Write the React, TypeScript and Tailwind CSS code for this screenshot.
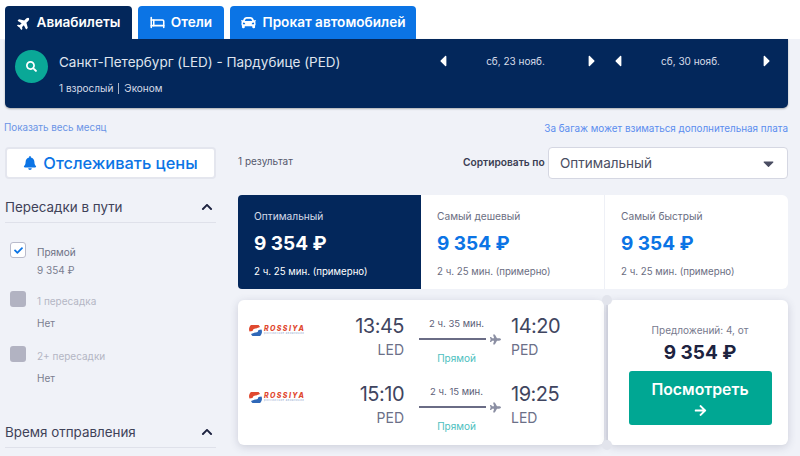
import { FaPlane, FaCar, FaBell, FaSearch, FaChevronUp, FaArrowRight, FaCaretLeft, FaCaretRight, FaCaretDown, FaCheck } from "react-icons/fa";
import { Bed } from "lucide-react";

function Logo() {
  return (
    <div className="flex items-center gap-[2px] w-[55px] h-[14px]">
      <svg width="13" height="11" viewBox="0 0 13 11" className="shrink-0">
        <path d="M0.5 6.5 A5.5 5.5 0 0 1 11 2 L7 3.5 A3 3 0 0 0 3.5 6 Z" fill="#e0492f" />
        <path d="M12.5 4.5 A5.5 5.5 0 0 1 2 9 L6 7.5 A3 3 0 0 0 9.5 5 Z" fill="#2f68b8" />
      </svg>
      <div className="flex flex-col items-start leading-none">
        <span className="text-[7px] leading-[7px] font-extrabold italic tracking-[1.4px] text-[#e0492f]">ROSSIYA</span>
        <span className="text-[2.5px] leading-[3px] text-[#8aa4cc] tracking-[0.6px] whitespace-nowrap">российские авиалинии</span>
      </div>
    </div>
  );
}

function Flight({ dep, from, dur, arr, to, logoTop }: { dep: string; from: string; dur: string; arr: string; to: string; logoTop: string }) {
  return (
    <div className="flex items-start h-[68px]">
      <div className={`w-[55px] ${logoTop}`}><Logo /></div>
      <div className="w-[100px] text-right">
        <div className="text-[20px] leading-[26px] tracking-[-0.5px] text-[#3f4560]">{dep}</div>
        <div className="text-[14px] leading-[20px] mt-[1px] text-[#6b7088]">{from}</div>
      </div>
      <div className="w-[82px] ml-[15px] flex flex-col">
        <div className="w-[75px] text-center text-[9.5px] leading-[14px] mt-[4px] text-[#5c6078] whitespace-nowrap">{dur}</div>
        <div className="flex items-center h-[14px] mt-[1px]">
          <div className="w-[67px] h-[2px] bg-[#6a6c85]" />
          <FaPlane className="ml-[4px] text-[#8b8fa3] text-[11px]" />
        </div>
        <div className="w-[75px] text-center text-[10px] leading-[14px] mt-[5px] text-[#4dbfc0]">Прямой</div>
      </div>
      <div className="ml-[10px]">
        <div className="text-[20px] leading-[26px] tracking-[-0.5px] text-[#3f4560]">{arr}</div>
        <div className="text-[14px] leading-[20px] mt-[1px] text-[#6b7088]">{to}</div>
      </div>
    </div>
  );
}

function Stop({ label, price, checked }: { label: string; price: string; checked?: boolean }) {
  return (
    <div className={`flex items-start pl-[5px] ${checked ? "h-[49px]" : "h-[55px]"}`}>
      {checked ? (
        <div className="w-[16px] h-[16px] rounded-[3px] bg-white border border-[#b9bbcb] flex items-center justify-center">
          <FaCheck className="text-[#0b74e5] text-[9px]" />
        </div>
      ) : (
        <div className="w-[16px] h-[16px] rounded-[3px] bg-[#b2b3c2]" />
      )}
      <div className="ml-[11px] mt-[3px]">
        <div className={`text-[10px] leading-[14px] ${checked ? "text-[#6f7286]" : "text-[#b4b6c4]"}`}>{label}</div>
        <div className={`text-[10px] leading-[14px] text-[#7b7e90] ${checked ? "mt-[4px]" : "mt-[8px]"}`}>{price}</div>
      </div>
    </div>
  );
}

function FilterHead({ title }: { title: string }) {
  return (
    <div className="flex items-center justify-between h-[30px] border-b border-[#dfe1ea] pr-[3px] pb-[1px]">
      <span className="text-[13.4px] text-[#3f4258]">{title}</span>
      <FaChevronUp className="text-[#1d2340] text-[12px]" />
    </div>
  );
}

function Stat({ title, active, last }: { title: string; active?: boolean; last?: boolean }) {
  return (
    <div className={`flex-1 h-[94px] pl-[16px] pt-[14px] ${active ? "bg-[#03275b] rounded-l-[4px]" : "bg-white"} ${last ? "rounded-r-[6px] border-l border-[#eef0f6]" : ""}`}>
      <div className={`text-[10.2px] leading-[14px] ${active ? "text-[#d5dbe8]" : "text-[#6b6e82]"}`}>{title}</div>
      <div className={`text-[19px] leading-[24px] mt-[9px] font-bold ${active ? "text-white" : "text-[#0b74e5]"}`}>9 354 ₽</div>
      <div className={`text-[9.7px] leading-[14px] mt-[9px] ${active ? "text-white" : "text-[#6b6e82]"}`}>2 ч. 25 мин. (примерно)</div>
    </div>
  );
}

export default function App() {
  return (
    <div className="w-[800px] h-[456px] overflow-hidden bg-[#f0f2f8] font-['Inter','Liberation_Sans',sans-serif]">
      <div className="bg-white h-[39px] pt-[6px] pl-[5px] flex items-stretch gap-[6px] text-[13.6px] font-semibold text-white">
        <div className="w-[127px] bg-[#03275b] rounded-t-[4px] flex items-center justify-center gap-[6px]">
          <FaPlane className="text-[14px] -rotate-45" /><span>Авиабилеты</span>
        </div>
        <div className="w-[86px] bg-[#0b74e5] rounded-t-[4px] flex items-center justify-center gap-[6px]">
          <Bed size={15} strokeWidth={2.5} /><span>Отели</span>
        </div>
        <div className="w-[186px] bg-[#0b74e5] rounded-t-[4px] flex items-center justify-center gap-[7px]">
          <FaCar className="text-[15px]" /><span>Прокат автомобилей</span>
        </div>
      </div>

      <div className="mx-[5px] w-[783px] h-[69px] bg-[#03275b] rounded-b-[5px] shadow-[0_1px_2px_rgba(0,0,0,0.3)] flex pl-[10px] text-white">
        <div className="mt-[11px] w-[33px] h-[33px] rounded-full bg-[#0aa897] flex items-center justify-center">
          <FaSearch className="text-[11px]" />
        </div>
        <div className="ml-[11px] w-[365px]">
          <div className="text-[13.5px] leading-[18px] mt-[14px] text-[#dfe4ee] whitespace-nowrap">Санкт-Петербург (LED) - Пардубице (PED)</div>
          <div className="flex items-center mt-[11px] text-[10px] leading-[12px] text-[#d7dce8]">
            <span>1 взрослый</span>
            <span className="w-px h-[11px] bg-[#aab3c6] mx-[5px]" />
            <span>Эконом</span>
          </div>
        </div>
        <div className="flex items-start gap-[8px] mt-[13px] ml-[10px]">
          {["сб, 23 нояб.", "сб, 30 нояб."].map((d) => (
            <div key={d} className="w-[167px] h-[18px] flex items-center justify-between">
              <FaCaretLeft className="text-[18px]" />
              <span className="text-[10px] mr-[4px] text-[#d7dce8]">{d}</span>
              <FaCaretRight className="text-[18px]" />
            </div>
          ))}
        </div>
      </div>

      <div className="flex pl-[5px] w-[788px]">
        <div className="w-[211px] shrink-0">
          <div className="text-[9.8px] leading-[12px] mt-[14px] -ml-px text-[#6a94e6]">Показать весь месяц</div>
          <div className="mt-[13px] h-[32px] bg-white border-2 border-[#e4e6ee] rounded-[4px] flex items-center justify-center gap-[6px] text-[#0b74e5] text-[16.4px] font-medium">
            <FaBell className="text-[14px]" /><span>Отслеживать цены</span>
          </div>
          <div className="mt-[14px]"><FilterHead title="Пересадки в пути" /></div>
          <div className="mt-[19px]">
            <Stop label="Прямой" price="9 354 ₽" checked />
            <Stop label="1 пересадка" price="Нет" />
            <Stop label="2+ пересадки" price="Нет" />
          </div>
          <div className="mt-[17px]"><FilterHead title="Время отправления" /></div>
        </div>

        <div className="ml-[22px] flex-1">
          <div className="text-right text-[9.9px] leading-[12px] mt-[14px] text-[#5b8def]">За багаж может взиматься дополнительная плата</div>
          <div className="flex items-center mt-[13px] h-[32px]">
            <span className="w-[225px] text-[10px] text-[#55586c] -mt-[4px]">1 результат</span>
            <span className="w-[85px] text-[10.2px] font-semibold text-[#3a3d52] whitespace-nowrap">Сортировать по</span>
            <div className="flex-1 h-[32px] bg-white border border-[#d5d7e2] rounded-[4px] flex items-center justify-between pl-[11px] pr-[10px]">
              <span className="text-[13.5px] pt-[1px] text-[#4a4d62]">Оптимальный</span>
              <FaCaretDown className="text-[#4a4d62] text-[17px]" />
            </div>
          </div>

          <div className="flex mt-[16px]">
            <Stat title="Оптимальный" active />
            <Stat title="Самый дешевый" />
            <Stat title="Самый быстрый" last />
          </div>

          <div className="flex mt-[11px] h-[145px] relative">
            <div className="w-[366px] h-full bg-white rounded-[6px] shadow-[0_2px_8px_rgba(60,65,100,0.2)] pl-[11px] pt-[13px] overflow-hidden">
              <Flight dep="13:45" from="LED" dur="2 ч. 35 мин." arr="14:20" to="PED" logoTop="mt-[10px]" />
              <Flight dep="15:10" from="PED" dur="2 ч. 15 мин." arr="19:25" to="LED" logoTop="mt-[9px]" />
            </div>
            <div className="w-[2px] h-full bg-[#dcdee7] ml-[2px]" />
            <div className="flex-1 h-full bg-white rounded-[6px] shadow-[0_2px_8px_rgba(60,65,100,0.2)] flex flex-col items-center pt-[23px] pl-[4px]">
              <div className="text-[10px] leading-[14px] text-[#777a8e]">Предложений: 4, от</div>
              <div className="text-[19px] leading-[22px] mt-[5px] font-bold text-[#1d2340]">9 354 ₽</div>
              <div className="mt-[7px] w-[143px] h-[54px] bg-[#00a793] rounded-[3px] flex flex-col items-center justify-center text-white text-[15.8px] font-semibold leading-[20px]">
                <span>Посмотреть</span>
                <FaArrowRight className="text-[13px] mt-[4px]" />
              </div>
            </div>
            <div className="absolute left-[364px] -top-[5px] w-[10px] h-[10px] rounded-full bg-[#e2e4ec]" />
            <div className="absolute left-[364px] -bottom-[5px] w-[10px] h-[10px] rounded-full bg-[#e2e4ec]" />
          </div>
        </div>
      </div>
    </div>
  );
}
